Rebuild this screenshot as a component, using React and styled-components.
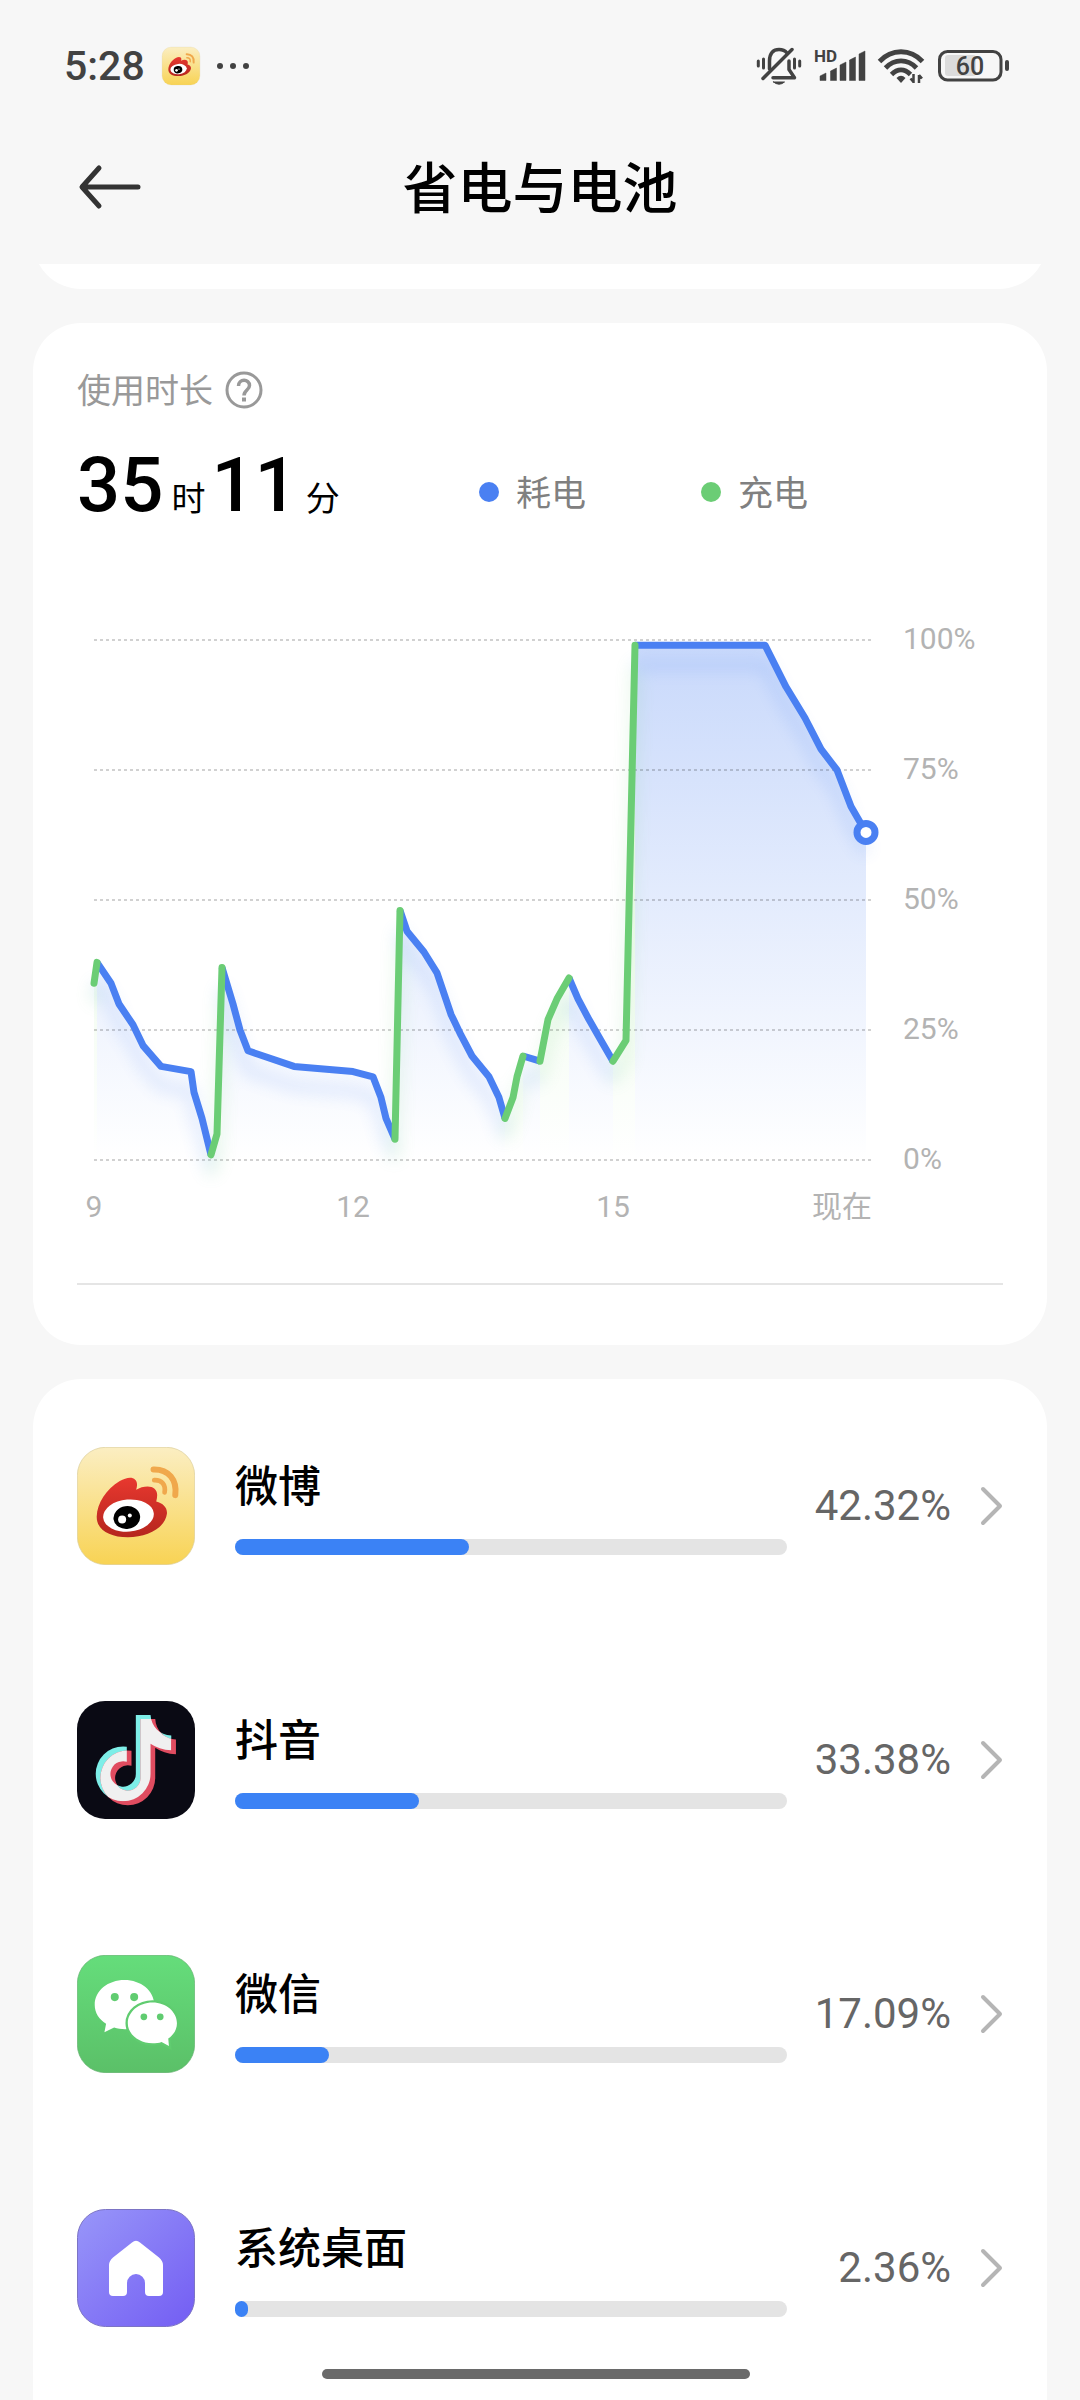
import React from 'react';
import styled, { createGlobalStyle } from 'styled-components';

const GlobalStyle = createGlobalStyle`
  * {
    box-sizing: border-box;
  }

  body {
    margin: 0;
    background-color: #f7f7f7;
    color: #000;
    font-family: Roboto, 'Noto Sans CJK SC', sans-serif;
  }
`;

const Screen = styled.div`
  display: flex;
  flex-direction: column;
  height: 100vh;
  overflow: hidden;
`;

const StatusBar = styled.div`
  display: flex;
  justify-content: space-between;
  align-items: center;
  height: 110px;
  padding: 22px 70px 0 64px;
  color: #424242;
`;

const StatusGroup = styled.div`
  display: flex;
  align-items: center;
  gap: ${(props) => props.$gap}px;

  svg {
    flex-shrink: 0;
    overflow: visible;
  }
`;

const Clock = styled.span`
  font-size: 41px;
  line-height: 44px;
  font-weight: 500;
`;

const AppBar = styled.header`
  display: grid;
  grid-template-columns: 1fr auto 1fr;
  align-items: center;
  height: 154px;
  padding: 0 77px;
`;

const Title = styled.h1`
  margin: 0;
  font-family: Lato, 'Noto Sans CJK SC', sans-serif;
  font-size: 55px;
  line-height: 80px;
  font-weight: 500;
`;

const IconButton = styled.button`
  display: flex;
  justify-self: start;
  padding: 0;
  border: none;
  background: none;
  cursor: pointer;
`;

const Content = styled.main`
  flex: 1;
  display: flex;
  flex-direction: column;
  gap: 34px;
  padding: 0 33px;
`;

const ScrolledCard = styled.div`
  display: flex;
  align-items: flex-end;
  height: 25px;
  overflow: hidden;

  &::after {
    content: '';
    flex: 1;
    height: 120px;
    border-radius: 48px;
    background-color: #fff;
  }
`;

const Card = styled.section`
  padding: 0 44px;
  border-radius: 48px;
  background-color: #fff;
`;

const UsageCard = styled(Card)`
  padding-top: 47px;
  padding-bottom: 60px;
`;

const AppsCard = styled(Card)`
  flex: 1;
  border-bottom-left-radius: 0;
  border-bottom-right-radius: 0;
`;

const Label = styled.div`
  display: flex;
  align-items: center;
  gap: 12px;
  height: 40px;
  font-family: Lato, 'Noto Sans CJK SC', sans-serif;
  font-size: 34px;
  line-height: 40px;
  color: #999;
`;

const Summary = styled.div`
  display: flex;
  align-items: flex-end;
  margin-top: 30px;
`;

const Duration = styled.div`
  display: flex;
  align-items: baseline;
  flex: 0 0 402px;
  height: 84px;
`;

const Amount = styled.span`
  font-size: 76px;
  line-height: 90px;
  font-weight: 500;
`;

const Unit = styled.span`
  margin: 0 6px 0 8px;
  font-size: 34px;
  line-height: 40px;
`;

const Legend = styled.ul`
  display: flex;
  gap: 115px;
  margin: 0;
  padding: 0;
  list-style: none;
`;

const LegendItem = styled.li`
  display: flex;
  align-items: center;
  gap: 17px;
  font-family: Lato, 'Noto Sans CJK SC', sans-serif;
  font-size: 35px;
  line-height: 64px;
  color: #808080;

  &::before {
    content: '';
    width: 20px;
    height: 20px;
    border-radius: 50%;
    background-color: ${(props) => props.$color};
  }
`;

const Chart = styled.svg`
  display: block;
  width: 100%;
  margin-top: 56px;
  overflow: visible;

  text {
    font-size: 30px;
    fill: #b3b3b3;
  }
`;

const Divider = styled.hr`
  height: 2px;
  margin: 43px 0 0;
  border: none;
  background-color: #e5e5e5;
`;

const AppList = styled.ul`
  margin: 0;
  padding: 0;
  list-style: none;
`;

const AppRow = styled.a`
  display: grid;
  grid-template-columns: 118px 1fr 192px;
  column-gap: 24px;
  align-items: center;
  height: 254px;
  color: inherit;
  text-decoration: none;
`;

const AppInfo = styled.div`
  display: flex;
  flex-direction: column;
  gap: 22px;
  padding-left: 16px;
`;

const AppName = styled.span`
  font-size: 43px;
  line-height: 60px;
  font-weight: 500;
`;

const Track = styled.div`
  height: 16px;
  border-radius: 8px;
  background-color: #e4e4e4;
`;

const Fill = styled.div`
  height: 16px;
  border-radius: 8px;
  background-color: #3b82f5;
`;

const AppShare = styled.div`
  display: flex;
  justify-content: flex-end;
  align-items: center;
  gap: 28px;
  font-size: 42px;
  line-height: 60px;
  color: #666;

  svg {
    flex-shrink: 0;
  }
`;

const HomeIndicator = styled.div`
  position: fixed;
  left: 0;
  right: 8px;
  bottom: 21px;
  width: 428px;
  height: 10px;
  margin: 0 auto;
  border-radius: 5px;
  background-color: #6a6a6a;
`;

const BLUE = '#4a80f2';
const GREEN = '#6bcd75';

// One entry per stretch of the day, points are [x, battery level]
const segments = [
  { charging: true, points: [[17, 34], [20, 38]] },
  {
    points: [[20, 38], [34, 34], [42, 30], [56, 26], [66, 22], [84, 18], [114, 17], [117, 13], [125, 8], [134, 1]],
  },
  { charging: true, points: [[134, 1], [140, 5], [145, 37]] },
  {
    points: [[145, 37], [156, 30], [163, 25], [171, 21], [217, 18], [276, 17], [296, 16], [304, 12], [309, 8], [318, 4]],
  },
  { charging: true, points: [[318, 4], [323, 48]] },
  {
    points: [
      [323, 48], [330, 44], [347, 40], [360, 36], [374, 28], [384, 24], [395, 20], [412, 16], [422, 12], [428, 8],
    ],
  },
  { charging: true, points: [[428, 8], [436, 12], [440, 16], [446, 20]] },
  { points: [[446, 20], [463, 19]] },
  { charging: true, points: [[463, 19], [471, 27], [480, 31], [492, 35]] },
  { points: [[492, 35], [501, 31], [512, 27], [524, 23], [536, 19]] },
  { charging: true, points: [[536, 19], [549, 23], [558, 99]] },
  {
    points: [[558, 99], [688, 99], [709, 91], [728, 85], [744, 79], [760, 75], [774, 68], [789, 63]],
  },
];

const levels = [100, 75, 50, 25, 0];
const hours = [
  { x: 17, text: '9' },
  { x: 276, text: '12' },
  { x: 536, text: '15' },
];

const levelToY = (level) => 580 - level * 5.2;
const toLine = (points) => points.map(([x, level]) => `${x},${levelToY(level)}`).join(' ');
const toArea = (points) => `${points[0][0]},580 ${toLine(points)} ${points[points.length - 1][0]},580`;

const strokeOf = (segment) => (segment.charging ? GREEN : BLUE);

// Charging is drawn over the discharge line so its round caps stay on top
const ordered = [...segments].sort((a, b) => Number(!!a.charging) - Number(!!b.charging));

const BatteryChart = () => (
  <Chart viewBox="0 0 926 660" role="img" aria-label="电量">
    <defs>
      <linearGradient id="usedArea" gradientUnits="userSpaceOnUse" x1="0" y1="65" x2="0" y2="580">
        <stop offset="0" stopColor={BLUE} stopOpacity="0.3" />
        <stop offset="1" stopColor={BLUE} stopOpacity="0" />
      </linearGradient>
      <linearGradient id="chargedArea" gradientUnits="userSpaceOnUse" x1="0" y1="65" x2="0" y2="580">
        <stop offset="0" stopColor="#7be06a" stopOpacity="0.26" />
        <stop offset="1" stopColor="#7be06a" stopOpacity="0" />
      </linearGradient>
      <filter id="glow" filterUnits="userSpaceOnUse" x="-40" y="0" width="960" height="660">
        <feGaussianBlur stdDeviation="8" />
      </filter>
    </defs>

    {segments.map((segment, i) => (
      <polygon
        key={i}
        points={toArea(segment.points)}
        fill={segment.charging ? 'url(#chargedArea)' : 'url(#usedArea)'}
      />
    ))}

    {levels.map((level) => (
      <g key={level}>
        <line
          x1="17"
          x2="795"
          y1={levelToY(level)}
          y2={levelToY(level)}
          stroke="#000"
          strokeOpacity="0.18"
          strokeWidth="2"
          strokeDasharray="3 3"
        />
        <text x="826" y={levelToY(level) + 9}>{level}%</text>
      </g>
    ))}

    <g filter="url(#glow)" opacity="0.18" transform="translate(0 20)">
      {segments.map((segment, i) => (
        <polyline key={i} points={toLine(segment.points)} fill="none" stroke={strokeOf(segment)} strokeWidth="9" />
      ))}
    </g>

    {ordered.map((segment, i) => (
      <polyline
        key={i}
        points={toLine(segment.points)}
        fill="none"
        stroke={strokeOf(segment)}
        strokeWidth="7"
        strokeLinejoin="round"
        strokeLinecap={segment.charging ? 'round' : 'butt'}
      />
    ))}
    <circle cx="789" cy={levelToY(63)} r="9" fill="#fff" stroke={BLUE} strokeWidth="7" />

    {hours.map((hour) => (
      <text key={hour.text} x={hour.x} y="637" textAnchor="middle">{hour.text}</text>
    ))}
    <text x="795" y="637" textAnchor="end">现在</text>
  </Chart>
);

const WeiboIcon = ({ size = 118 }) => (
  <svg width={size} height={size} viewBox="52 82 353 353">
    <defs>
      <linearGradient id="weiboBg" x1="0" y1="0" x2="0" y2="1">
        <stop offset="0" stopColor="#fbeec2" />
        <stop offset="1" stopColor="#f8d354" />
      </linearGradient>
      <linearGradient id="weiboBody" x1="0" y1="0" x2="0" y2="1">
        <stop offset="0" stopColor="#e8382f" />
        <stop offset="1" stopColor="#b5261e" />
      </linearGradient>
    </defs>
    <rect x="53" y="83" width="351" height="351" rx="84" fill="url(#weiboBg)" stroke="#d9cc98" strokeWidth="2" />
    <path
      d="M111 290C112 250 140 208 180 184C198 174 216 170 226 180C234 188 232 200 229 210C246 200 272 196 284 207C294 216 293 230 289 245C310 250 323 264 321 282C316 324 262 352 204 352C150 352 110 330 111 290Z"
      fill="url(#weiboBody)"
    />
    <ellipse cx="206" cy="287" rx="76" ry="48" fill="#fff" transform="rotate(-5 206 287)" />
    <ellipse cx="201" cy="293" rx="40" ry="34" fill="#000" transform="rotate(-8 201 293)" />
    <circle cx="187" cy="299" r="12" fill="#fff" />
    <circle cx="210" cy="287" r="6" fill="#fff" />
    <g fill="none" stroke="#f0a84c" strokeLinecap="round">
      <path d="M283 181C306 180 318 194 314 218" strokeWidth="14" />
      <path d="M281 149C326 148 352 180 346 226" strokeWidth="18" />
    </g>
  </svg>
);

const note =
  'M228 105H272C274 140 300 166 334 166V210C310 210 288 202 272 191V281A82 82 0 1 1 190 199L201 200V245A38 38 0 1 0 228 281Z';

const DouyinIcon = () => (
  <svg width="118" height="118" viewBox="52 63 353 353">
    <defs>
      <clipPath id="noteClip">
        <path d={note} />
      </clipPath>
    </defs>
    <rect x="52" y="63" width="353" height="353" rx="84" fill="#0a0a14" />
    <path d={note} fill="#7eeee8" />
    <path d={note} fill="#e04c60" transform="translate(14 12)" />
    <g clipPath="url(#noteClip)">
      <path d={note} fill="#f0f0f0" transform="translate(14 12)" />
    </g>
  </svg>
);

const WechatIcon = () => (
  <svg width="118" height="118" viewBox="52 75 353 353">
    <defs>
      <linearGradient id="wechatBg" x1="0" y1="0" x2="0" y2="1">
        <stop offset="0" stopColor="#65dd7b" />
        <stop offset="1" stopColor="#5bc068" />
      </linearGradient>
    </defs>
    <rect x="53" y="76" width="351" height="351" rx="84" fill="url(#wechatBg)" stroke="#62b06d" strokeWidth="2" />
    <path
      d="M194 150C145 150 105 182 105 224C105 248 118 268 139 281L134 306L163 292C173 296 184 297 196 297C244 297 283 265 283 224C283 182 243 150 194 150Z"
      fill="#fff"
    />
    <path
      d="M278 217C319 217 351 245 351 279C351 298 341 314 325 325L327 347L305 335C297 338 288 339 278 339C237 339 204 312 204 279C204 245 237 217 278 217Z"
      fill="#fff"
      stroke="#60cc70"
      strokeWidth="14"
      paintOrder="stroke"
    />
    <g fill="#60cc70">
      <circle cx="165" cy="201" r="12" />
      <circle cx="223" cy="201" r="12" />
      <circle cx="252" cy="260" r="10" />
      <circle cx="301" cy="260" r="10" />
    </g>
  </svg>
);

const LauncherIcon = () => (
  <svg width="118" height="118" viewBox="0 0 118 118">
    <defs>
      <linearGradient id="launcherBg" x1="0" y1="0" x2="1" y2="1">
        <stop offset="0" stopColor="#9896f9" />
        <stop offset="1" stopColor="#735df3" />
      </linearGradient>
    </defs>
    <rect x="0.5" y="0.5" width="117" height="117" rx="28" fill="url(#launcherBg)" stroke="#7c74c4" />
    <path
      d="M55 33.5Q59 30 63 33.5L82 48.500Q86 52 86 56V83Q86 87 82 87H72Q68 87 68 83V74A9 9 0 0 0 50 74V83Q50 87 46 87H36Q32 87 32 83V56Q32 52 36 48.500Z"
      fill="#fff"
    />
  </svg>
);

const BackIcon = () => (
  <svg width="66" height="48" viewBox="0 0 66 48" fill="none" stroke="#333" strokeWidth="5" strokeLinecap="round" strokeLinejoin="round">
    <path d="M61 24H6M22 5L5 24L22 43" />
  </svg>
);

const HelpIcon = () => (
  <svg width="38" height="38" viewBox="0 0 38 38" fill="none" stroke="#999" strokeWidth="3">
    <circle cx="19" cy="19" r="17" />
    <path d="M13.500 15C13.500 7.500 24.500 7.500 24.500 14.500C24.500 19 19 19 19 24.500" strokeWidth="3.500" />
    <path d="M17 28.500H21" strokeWidth="4" />
  </svg>
);

const ChevronIcon = () => (
  <svg width="24" height="42" viewBox="0 0 24 42" fill="none" stroke="#b5b5b5" strokeWidth="4" strokeLinecap="round" strokeLinejoin="round">
    <path d="M4 4L21 21L4 38" />
  </svg>
);

const MoreIcon = () => (
  <svg width="34" height="8" viewBox="0 0 34 8" fill="currentColor">
    <circle cx="3" cy="4" r="3" />
    <circle cx="16" cy="4" r="3" />
    <circle cx="29" cy="4" r="3" />
  </svg>
);

const MuteIcon = () => (
  <svg width="46" height="40" viewBox="757 46 46 40" fill="none" stroke="currentColor" strokeWidth="3.500" strokeLinecap="round" strokeLinejoin="round">
    <path d="M770.500 69V61C770.500 53 774.500 49.500 780 49.500C783.500 49.500 786 50.500 788 53" />
    <path d="M790 61V69.500L795.500 77.700H774" />
    <path d="M764 78.500L793 49.500" />
    <path d="M774.500 82H785.500Q780 86.500 774.500 82Z" fill="currentColor" strokeWidth="1" />
    <path d="M759.300 61V66M764.500 59V68M795.500 59V68M800.700 61V66" strokeWidth="3" />
  </svg>
);

const SignalIcon = () => (
  <svg width="52" height="36" viewBox="813 48 52 36" fill="currentColor">
    <text x="813" y="62" fontSize="17" fontWeight="700">HD</text>
    <path d="M819 80.500V76L825 73V80.500ZM829.500 80.500V71L835.500 68V80.500ZM839 80.500V65L845 62V80.500ZM848.500 80.500V60L854.500 57V80.500ZM858 80.500V54L864 51V80.500Z" stroke="currentColor" strokeLinejoin="round" strokeWidth="0.5" />
  </svg>
);

const WifiIcon = () => (
  <svg width="48" height="36" viewBox="877 48 48 36" fill="none" stroke="currentColor" strokeWidth="4.800">
    <path d="M878.500 61.500C890.500 48.500 909.500 48.500 921.500 61.500" />
    <path d="M884.500 68C893.500 58.500 906.500 58.500 915.500 68" />
    <path d="M890.500 74.500C896.500 68.500 903.500 68.500 909.500 74.500" />
    <path d="M900 83L895.500 78Q900 73.500 904.500 78Z" fill="currentColor" stroke="none" />
    <path d="M912.500 74V83M912.500 82L909.500 78.500M918 83V75M918 75L921 78.500" strokeWidth="2.500" />
  </svg>
);

const BatteryIcon = () => (
  <svg width="72" height="32" viewBox="938 50 72 32">
    <rect x="939.500" y="51.500" width="61.500" height="28.500" rx="8" fill="none" stroke="currentColor" strokeWidth="3" />
    <rect x="945" y="55" width="31" height="21" rx="3" fill="#dcdcdc" />
    <rect x="1005" y="60" width="4" height="11" rx="2" fill="currentColor" />
    <text x="970" y="75" fontSize="25" fontWeight="500" textAnchor="middle" fill="currentColor">60</text>
  </svg>
);

const apps = [
  { id: 'weibo', name: '微博', share: 42.32, Icon: WeiboIcon },
  { id: 'douyin', name: '抖音', share: 33.38, Icon: DouyinIcon },
  { id: 'wechat', name: '微信', share: 17.09, Icon: WechatIcon },
  { id: 'launcher', name: '系统桌面', share: 2.36, Icon: LauncherIcon },
];

const App = () => (
  <Screen>
    <GlobalStyle />
    <StatusBar>
      <StatusGroup $gap={17}>
        <Clock>5:28</Clock>
        <WeiboIcon size={38} />
        <MoreIcon />
      </StatusGroup>
      <StatusGroup $gap={12}>
        <MuteIcon />
        <SignalIcon />
        <WifiIcon />
        <BatteryIcon />
      </StatusGroup>
    </StatusBar>

    <AppBar>
      <IconButton type="button" aria-label="返回">
        <BackIcon />
      </IconButton>
      <Title>省电与电池</Title>
    </AppBar>

    <Content>
      <ScrolledCard />

      <UsageCard>
        <Label>
          使用时长
          <IconButton type="button" aria-label="使用时长说明">
            <HelpIcon />
          </IconButton>
        </Label>
        <Summary>
          <Duration>
            <Amount>35</Amount>
            <Unit>时</Unit>
            <Amount>11</Amount>
            <Unit>分</Unit>
          </Duration>
          <Legend>
            <LegendItem $color={BLUE}>耗电</LegendItem>
            <LegendItem $color={GREEN}>充电</LegendItem>
          </Legend>
        </Summary>
        <BatteryChart />
        <Divider />
      </UsageCard>

      <AppsCard>
        <AppList>
          {apps.map(({ id, name, share, Icon }) => (
            <li key={id}>
              <AppRow href={`#${id}`}>
                <Icon />
                <AppInfo>
                  <AppName>{name}</AppName>
                  <Track>
                    <Fill style={{ width: `${share}%` }} />
                  </Track>
                </AppInfo>
                <AppShare>
                  {share.toFixed(2)}%
                  <ChevronIcon />
                </AppShare>
              </AppRow>
            </li>
          ))}
        </AppList>
      </AppsCard>
    </Content>

    <HomeIndicator />
  </Screen>
);

export default App;
